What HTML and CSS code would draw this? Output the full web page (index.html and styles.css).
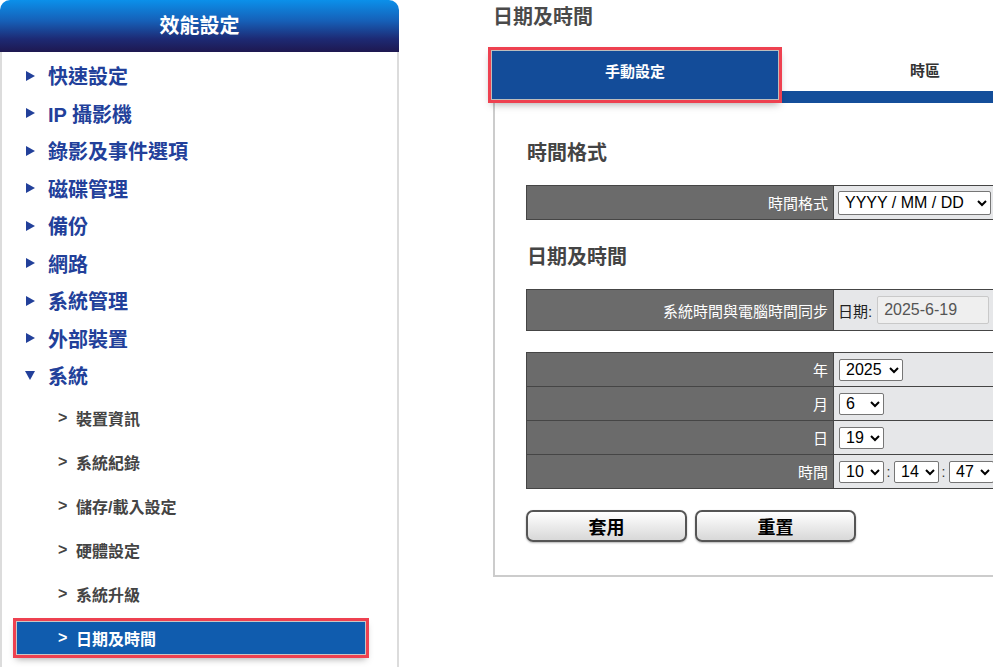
FILE: index.html
```html
<!DOCTYPE html>
<html lang="zh-Hant">
<head>
    <meta charset="UTF-8">
    <meta name="viewport" content="width=device-width, initial-scale=1.0">
    <title>日期及時間</title>
    <link rel="stylesheet" href="styles.css">
</head>
<body>
    <div class="sidebar">
        <div class="sidebar-header">效能設定</div>
        <div class="menu">
            <div class="menu-item"><span class="arrow"></span>快速設定</div>
            <div class="menu-item"><span class="arrow"></span>IP 攝影機</div>
            <div class="menu-item"><span class="arrow"></span>錄影及事件選項</div>
            <div class="menu-item"><span class="arrow"></span>磁碟管理</div>
            <div class="menu-item"><span class="arrow"></span>備份</div>
            <div class="menu-item"><span class="arrow"></span>網路</div>
            <div class="menu-item"><span class="arrow"></span>系統管理</div>
            <div class="menu-item"><span class="arrow"></span>外部裝置</div>
            <div class="menu-item"><span class="arrow down"></span>系統</div>
            <div class="submenu">
                <div class="sub-item"><span class="gt">&gt;</span>裝置資訊</div>
                <div class="sub-item"><span class="gt">&gt;</span>系統紀錄</div>
                <div class="sub-item"><span class="gt">&gt;</span>儲存/載入設定</div>
                <div class="sub-item"><span class="gt">&gt;</span>硬體設定</div>
                <div class="sub-item"><span class="gt">&gt;</span>系統升級</div>
                <div class="sub-item active"><span class="gt">&gt;</span>日期及時間</div>
            </div>
        </div>
    </div>

    <div class="main">
        <div class="page-title">日期及時間</div>
        <div class="tabs">
            <div class="tab active">手動設定</div>
            <div class="tab">時區</div>
        </div>
        <div class="panel">
            <h2 class="section-title first">時間格式</h2>
            <table class="form-table">
                <tr>
                    <td class="label">時間格式</td>
                    <td class="value">
                        <select class="sel-format">
                            <option>YYYY / MM / DD</option>
                            <option>MM / DD / YYYY</option>
                            <option>DD / MM / YYYY</option>
                        </select>
                    </td>
                </tr>
            </table>

            <h2 class="section-title">日期及時間</h2>
            <table class="form-table">
                <tr class="tall">
                    <td class="label">系統時間與電腦時間同步</td>
                    <td class="value">
                        <span class="date-label">日期:</span><input class="date-input" type="text" value="2025-6-19" disabled>
                    </td>
                </tr>
            </table>

            <table class="form-table gap">
                <tr>
                    <td class="label">年</td>
                    <td class="value"><select class="sel-year"><option>2025</option></select></td>
                </tr>
                <tr>
                    <td class="label">月</td>
                    <td class="value"><select class="sel-sm"><option>6</option></select></td>
                </tr>
                <tr>
                    <td class="label">日</td>
                    <td class="value"><select class="sel-sm"><option>19</option></select></td>
                </tr>
                <tr>
                    <td class="label">時間</td>
                    <td class="value">
                        <select class="sel-sm"><option>10</option></select><span class="colon">:</span><select class="sel-sm"><option>14</option></select><span class="colon">:</span><select class="sel-sm"><option>47</option></select>
                    </td>
                </tr>
            </table>

            <div class="buttons">
                <button class="btn">套用</button>
                <button class="btn">重置</button>
            </div>
        </div>
    </div>
</body>
</html>
```

FILE: styles.css
```css
body {
    margin: 0;
    display: flex;
    align-items: flex-start;
    overflow: hidden;
    height: 100vh;
    font-family: "Liberation Sans", "Noto Sans CJK TC", sans-serif;
    background-color: #fff;
}

/* sidebar */
.sidebar {
    width: 399px;
    flex: none;
}

.sidebar-header {
    height: 52px;
    line-height: 52px;
    text-align: center;
    color: #fff;
    font-size: 20px;
    font-weight: bold;
    border-radius: 10px 10px 0 0;
    background: linear-gradient(to bottom, #0b90ea 0%, #1660b8 40%, #1d2a74 75%, #1e1850 100%);
}

.menu {
    border-left: 2px solid #dcdcdc;
    border-right: 2px solid #dcdcdc;
    padding-top: 5px;
    height: 610px;
}

.menu-item {
    display: flex;
    align-items: center;
    height: 37.5px;
    padding-left: 24px;
    font-size: 20px;
    font-weight: bold;
    color: #22409a;
}

.arrow {
    width: 0;
    height: 0;
    border-left: 9px solid #22409a;
    border-top: 5px solid transparent;
    border-bottom: 5px solid transparent;
    margin-right: 13px;
}

.arrow.down {
    border-left: 5px solid transparent;
    border-right: 5px solid transparent;
    border-top: 9px solid #22409a;
    border-bottom: none;
    margin-left: -1px;
    margin-right: 13px;
}

.submenu {
    display: flex;
    flex-direction: column;
    gap: 10px;
    padding-top: 6px;
}

.sub-item {
    display: flex;
    align-items: center;
    height: 34px;
    margin: 0 31px 0 14px;
    padding-left: 42px;
    font-size: 16px;
    font-weight: bold;
    color: #444;
}

.gt {
    width: 18px;
}

.sub-item.active {
    background-color: #105cae;
    color: #fff;
    height: 32px;
    padding-left: 41px;
    border: 1px solid #c6c6c6;
    outline: 3px solid #ee4150;
    box-shadow: 0 4px 7px rgba(0,0,0,0.35);
}

/* main */
.main {
    flex: none;
    width: 600px;
    margin-left: 92px;
}

.page-title {
    margin: 5px 0 0 2px;
    height: 45px;
    line-height: 24px;
    font-size: 20px;
    font-weight: bold;
    color: #4a4a4a;
}

.tabs {
    display: flex;
    width: 580px;
    height: 53px;
    align-items: flex-start;
}

.tab {
    flex: 1;
    height: 41px;
    line-height: 42px;
    text-align: center;
    font-size: 15px;
    font-weight: bold;
    color: #333;
    border-bottom: 12px solid #144e9a;
}

.tab.active {
    flex: none;
    width: 286px;
    height: 48px;
    line-height: 42px;
    color: #fff;
    background-color: #134c99;
    border: 1px solid #bdbdbd;
    outline: 3px solid #ee4150;
    box-shadow: 0 4px 8px rgba(0,0,0,0.35);
    position: relative;
    z-index: 1;
}

.panel {
    margin-left: 2px;
    width: 547px;
    padding: 38px 0 33px 31px;
    border-left: 2px solid #cccccc;
    border-bottom: 2px solid #cccccc;
}

.section-title {
    margin: 25px 0 20px 1px;
    font-size: 20px;
    line-height: 24px;
    font-weight: bold;
    color: #444;
}

.section-title.first {
    margin-top: 0;
    margin-bottom: 20px;
}

.form-table {
    width: 516px;
    border-collapse: collapse;
    table-layout: fixed;
}

.form-table.gap {
    margin-top: 21px;
}

.form-table td {
    border: 1px solid #454545;
    height: 33px;
    padding: 0;
}

.form-table .label {
    width: 301px;
    padding-right: 5px;
    text-align: right;
    background-color: #6b6b6b;
    color: #fff;
    font-size: 15px;
}

.form-table .value {
    padding-left: 4px;
    background-color: #e6e7e9;
    white-space: nowrap;
    font-size: 15px;
    color: #222;
}

.form-table .tall td {
    height: 40px;
}

select {
    font-family: "Liberation Sans", sans-serif;
    font-size: 16px;
    color: #000;
    background-color: #fff;
    border: 1px solid #767676;
    border-radius: 2px;
    height: 22px;
    padding: 0 0 0 2px;
    vertical-align: middle;
}

.sel-format {
    width: 153px;
    height: 24px;
}

.sel-year {
    width: 64px;
    margin-left: 1px;
}

.sel-sm {
    width: 45px;
    margin-left: 1px;
}

.colon {
    display: inline-block;
    width: 9px;
    text-align: center;
    font-size: 14px;
    color: #333;
    vertical-align: middle;
}

.date-label {
    vertical-align: middle;
    margin-right: 5px;
}

.date-input {
    width: 112px;
    height: 28px;
    box-sizing: border-box;
    padding: 0 6px;
    font-family: "Liberation Sans", sans-serif;
    font-size: 16px;
    color: #555;
    background-color: #efefef;
    border: 1px solid #c9c9c9;
    border-radius: 2px;
    vertical-align: middle;
}

.buttons {
    display: flex;
    gap: 8px;
    margin-top: 21px;
}

.btn {
    width: 161px;
    height: 32px;
    border: 2px solid #555;
    border-radius: 7px;
    background: linear-gradient(to bottom, #ffffff, #d8d8d8);
    font-family: "Liberation Sans", "Noto Sans CJK TC", sans-serif;
    font-size: 18px;
    font-weight: bold;
    color: #000;
    box-shadow: 0 1px 2px rgba(0,0,0,0.3);
    padding: 0;
}
```
